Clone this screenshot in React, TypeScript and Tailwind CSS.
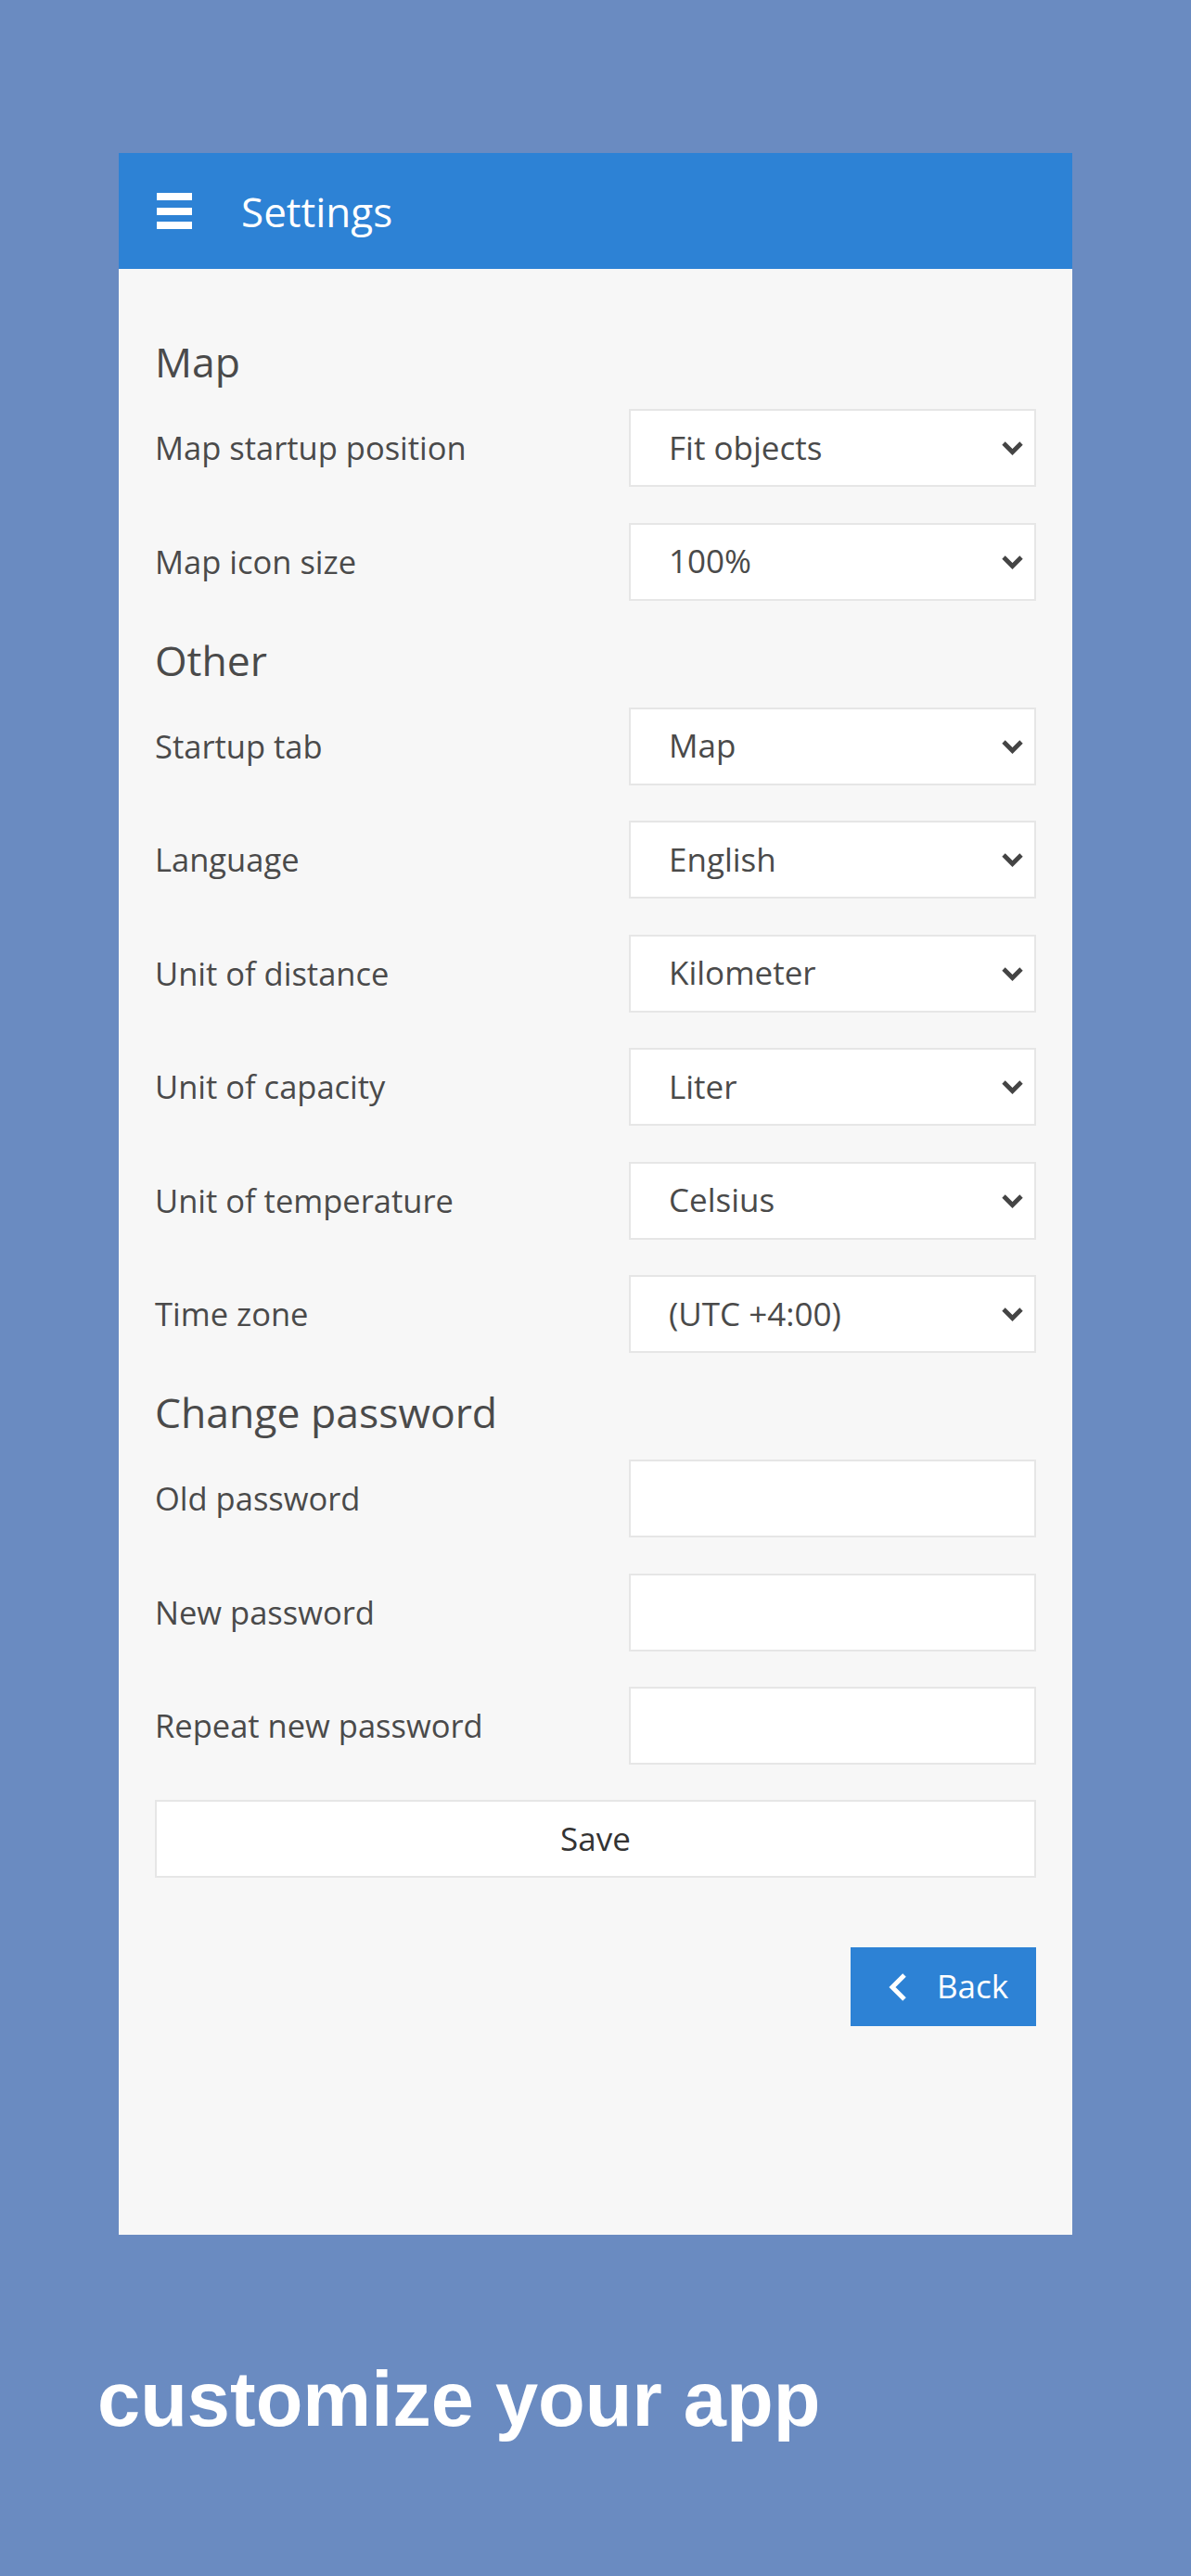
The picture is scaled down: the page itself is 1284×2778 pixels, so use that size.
import { useState } from "react";

type Field =
  | { kind: "select"; label: string; value: string; options: string[] }
  | { kind: "input"; label: string };

interface Section {
  title: string;
  fields: Field[];
}

const sections: Section[] = [
  {
    title: "Map",
    fields: [
      { kind: "select", label: "Map startup position", value: "Fit objects", options: ["Fit objects", "Last position"] },
      { kind: "select", label: "Map icon size", value: "100%", options: ["75%", "100%", "125%", "150%"] },
    ],
  },
  {
    title: "Other",
    fields: [
      { kind: "select", label: "Startup tab", value: "Map", options: ["Map", "Objects", "Events"] },
      { kind: "select", label: "Language", value: "English", options: ["English", "Deutsch", "Español"] },
      { kind: "select", label: "Unit of distance", value: "Kilometer", options: ["Kilometer", "Mile"] },
      { kind: "select", label: "Unit of capacity", value: "Liter", options: ["Liter", "Gallon"] },
      { kind: "select", label: "Unit of temperature", value: "Celsius", options: ["Celsius", "Fahrenheit"] },
      { kind: "select", label: "Time zone", value: "(UTC +4:00)", options: ["(UTC +0:00)", "(UTC +4:00)"] },
    ],
  },
  {
    title: "Change password",
    fields: [
      { kind: "input", label: "Old password" },
      { kind: "input", label: "New password" },
      { kind: "input", label: "Repeat new password" },
    ],
  },
];

function Chevron() {
  return (
    <svg
      className="pointer-events-none absolute right-[13px] top-1/2 -translate-y-1/2"
      width="25"
      height="17"
      viewBox="0 0 25 17"
    >
      <polyline points="3,3.5 12.5,13 22,3.5" fill="none" stroke="#444" strokeWidth="4.8" />
    </svg>
  );
}

function SelectBox({ value, options }: { value: string; options: string[] }) {
  const [current, setCurrent] = useState(value);
  return (
    <div className="relative w-[439px]">
      <select
        value={current}
        onChange={(e) => setCurrent(e.target.value)}
        className="h-[84px] w-full appearance-none rounded-none border-2 border-[#e6e6e6] bg-white pl-[41px] pr-12 text-[35px] text-[#4a4a4a] outline-none"
      >
        {options.map((o) => (
          <option key={o}>{o}</option>
        ))}
      </select>
      <Chevron />
    </div>
  );
}

export default function App() {
  return (
    <div className="min-h-screen bg-[#6a8bc1] pt-[165px] pb-[100px] font-['Open_Sans',sans-serif]">
      <div className="mx-auto w-[1028px] bg-[#f7f7f7]">
        {/* header */}
        <div className="flex h-[125px] items-center bg-[#2d82d5] pl-[41px]">
          <div className="flex w-[38px] flex-col gap-[7.5px]">
            <span className="block h-[8px] bg-white" />
            <span className="block h-[8px] bg-white" />
            <span className="block h-[8px] bg-white" />
          </div>
          <h1 className="ml-[53px] text-[44px] leading-none text-white">Settings</h1>
        </div>

        {/* body */}
        <div className="px-[39px] pt-[36px] pb-[225px]">
          {sections.map((s) => (
            <div key={s.title} className="mt-[36px]">
              <h2 className="mb-[24px] text-[44.5px] leading-[55px] text-[#4a4a4a]">{s.title}</h2>
              <div className="flex flex-col gap-[38.5px]">
                {s.fields.map((f) => (
                  <div key={f.label} className="flex h-[84px] items-center justify-between">
                    <label className="text-[34.5px] text-[#4a4a4a]">{f.label}</label>
                    {f.kind === "select" ? (
                      <SelectBox value={f.value} options={f.options} />
                    ) : (
                      <input
                        type="password"
                        className="h-[84px] w-[439px] rounded-none border-2 border-[#e6e6e6] bg-white px-4 text-[35px] outline-none"
                      />
                    )}
                  </div>
                ))}
              </div>
            </div>
          ))}

          <button className="mt-[38px] h-[84px] w-full border-2 border-[#e6e6e6] bg-white text-[35px] text-[#333]">
            Save
          </button>

          <div className="mt-[75px] flex justify-end">
            <button className="flex h-[85px] w-[200px] items-center bg-[#2d82d5] pl-[40px] text-[35px] text-white">
              <svg width="22" height="32" viewBox="0 0 22 32" className="mr-[31px]">
                <polyline points="18,3 5,16 18,29" fill="none" stroke="#fff" strokeWidth="5" />
              </svg>
              Back
            </button>
          </div>
        </div>
      </div>

      <p className="mt-[136px] pl-[105px] font-['Liberation_Sans',Arial,sans-serif] text-[83px] font-bold leading-none text-white">
        customize your app
      </p>
    </div>
  );
}
